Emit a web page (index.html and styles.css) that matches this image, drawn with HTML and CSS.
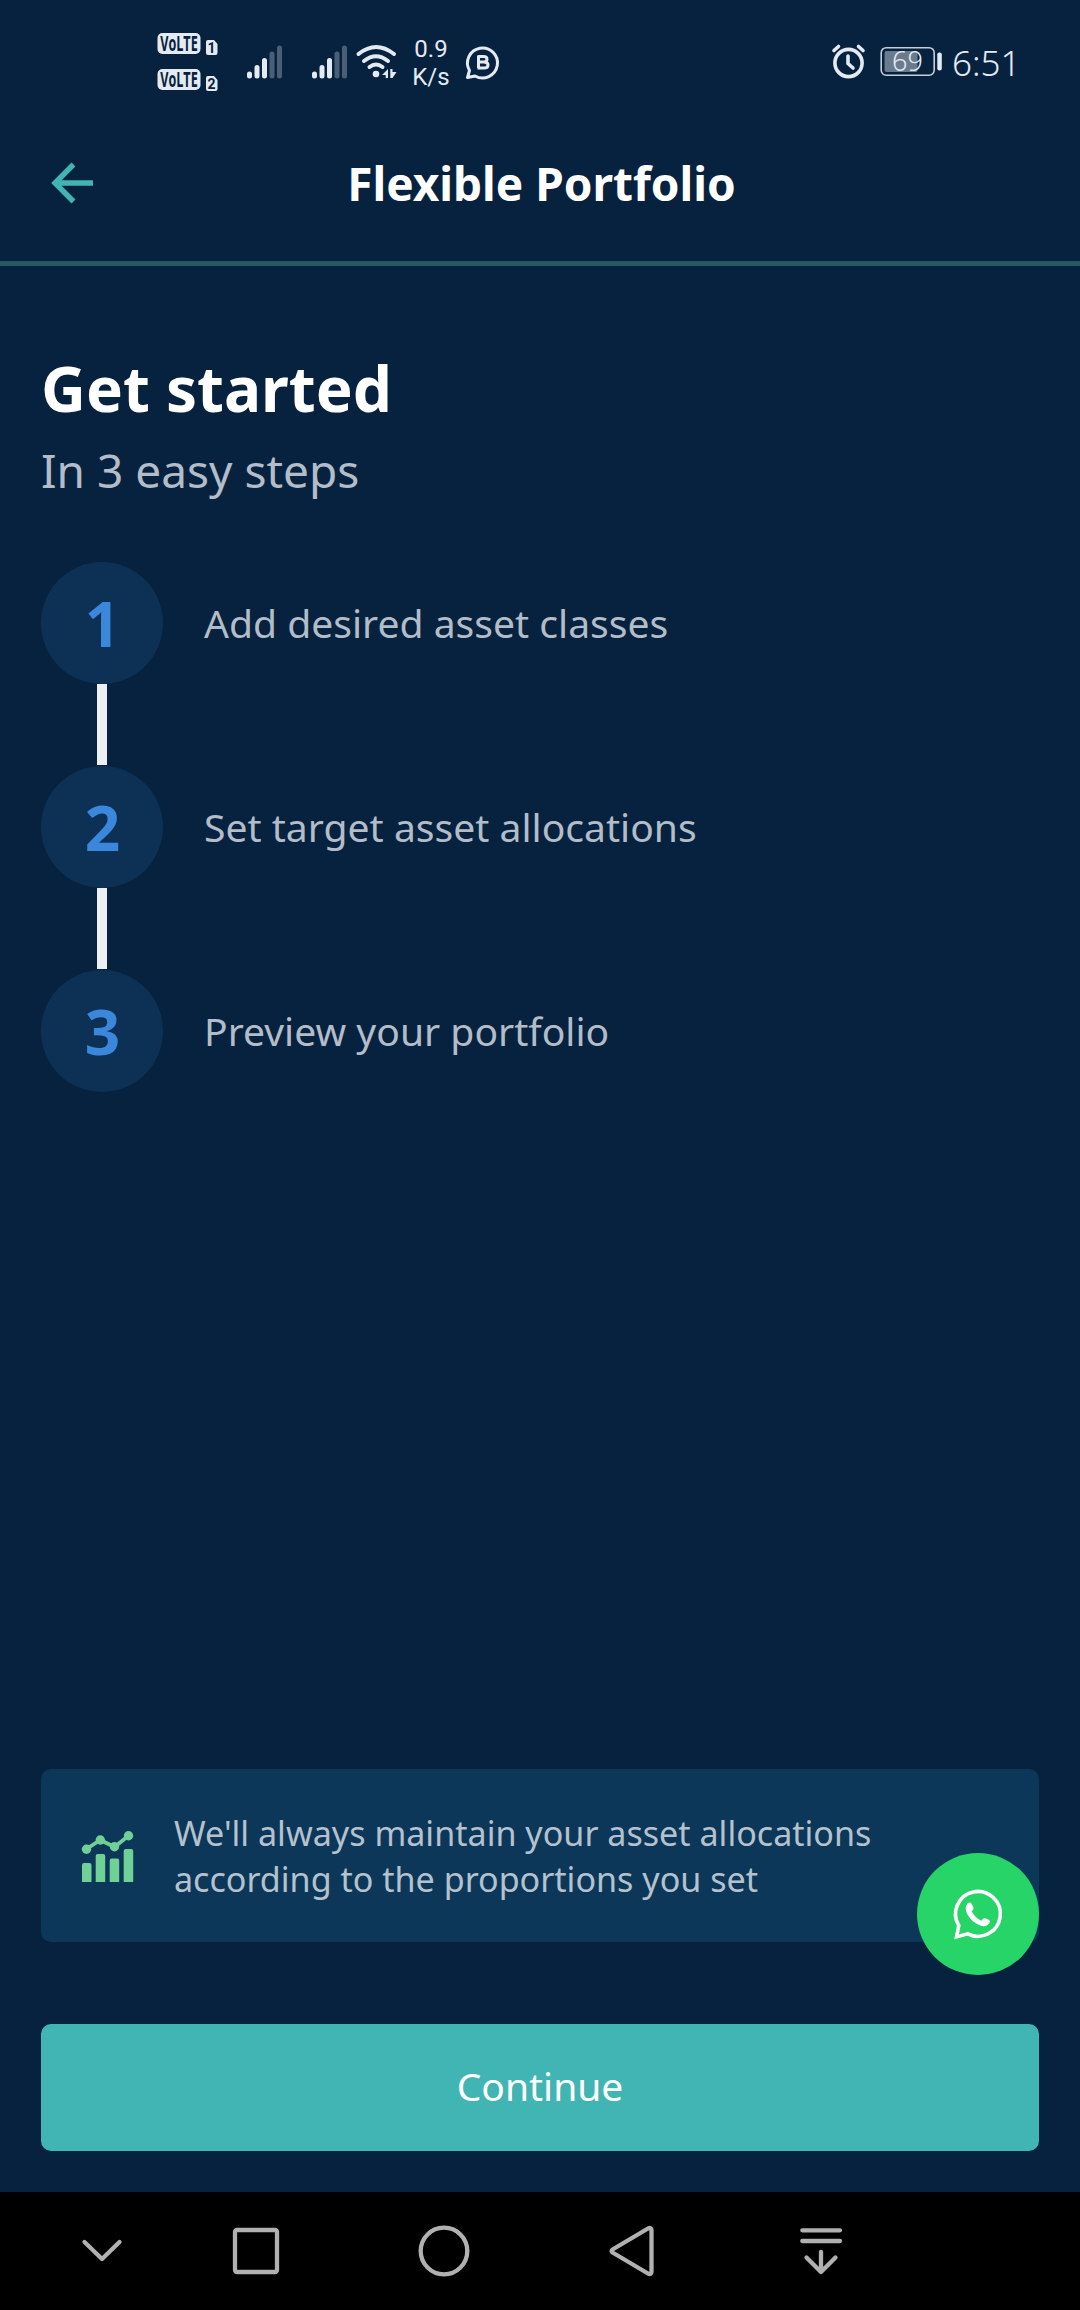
FILE: index.html
```html
<!DOCTYPE html>
<html lang="en">
<head>
<meta charset="utf-8">
<title>Flexible Portfolio</title>
<link rel="stylesheet" href="styles.css">
</head>
<body>
<div class="screen">
  <div class="status">
    <div class="status-left">
      <svg class="volte" width="62" height="60" viewBox="157 32 62 60">
        <g fill="#e4eaf1">
          <rect x="157.500" y="33" width="43" height="21" rx="5"/>
          <rect x="157.500" y="69" width="43" height="21" rx="5"/>
          <path d="M208 40h6l3.500 4v9q0 2-2 2h-7.500q-2 0-2-2v-11q0-2 2-2z"/>
          <path d="M208 76h6l3.500 4v9q0 2-2 2h-7.500q-2 0-2-2v-11q0-2 2-2z"/>
        </g>
        <g class="volte-text">
          <text transform="translate(179 51) scale(.6 1)">VoLTE</text>
          <text transform="translate(179 87) scale(.6 1)">VoLTE</text>
        </g>
        <g class="sim-text"><text x="211.500" y="52.500">1</text><text x="211.500" y="88.500">2</text></g>
      </svg>
      <svg class="signal" width="36" height="34" viewBox="0 0 36 34" stroke="#e4eaf1" stroke-width="5" stroke-linecap="round">
        <path d="M2.500 29v2M10 22.500V31M17.500 15.500V31"/><path d="M25 9V31M32.500 3V31" opacity=".3"/>
      </svg>
      <svg class="signal-two" width="36" height="34" viewBox="0 0 36 34" stroke="#e4eaf1" stroke-width="5" stroke-linecap="round">
        <path d="M2.500 29v2M10 22.500V31M17.500 15.500V31"/><path d="M25 9V31M32.500 3V31" opacity=".3"/>
      </svg>
      <svg class="wifi" width="42" height="36" viewBox="355 44 42 36" fill="none" stroke="#e4eaf1" stroke-width="4" stroke-linecap="round">
        <path d="M358.500 54Q376 40 394 54M364 61Q376 51.500 388 61M369.500 67Q376 62 382.500 67"/>
        <circle cx="376" cy="74" r="3.300" fill="#e4eaf1" stroke="none"/>
        <path d="M388 69v9h-2.300v-3h-3.700zM390.300 69h2.200v3h4l-4 6h-2.200z" fill="#e4eaf1" stroke="none"/>
      </svg>
      <div class="speed">0.9<br>K/s</div>
      <svg class="business" width="35" height="35" viewBox="465 45 35 35" fill="none" stroke="#e4eaf1" stroke-width="3" stroke-linejoin="round">
        <path d="M469.500 70.500A15 15 0 1 1 475 76L467.500 77.500z"/>
        <path d="M478.500 56V68M477.500 56.500h6q3.500 0 3.500 2.700t-3.500 2.700h-5h5.500q4 0 4 3t-4 3h-6.500" stroke-width="3"/>
      </svg>
    </div>
    <div class="status-right">
      <svg class="alarm" width="35" height="35" viewBox="831 44 35 35" fill="none" stroke="#e4eaf1" stroke-width="3.600" stroke-linecap="round">
        <circle cx="848.500" cy="63" r="13.600"/><path d="M848 56v7.500l5 4.500M834 50.500l4.500-4M863 50.500l-4.500-4"/>
      </svg>
      <svg class="battery" width="64" height="45" viewBox="880 38 64 45">
        <rect x="881.200" y="47.700" width="53" height="27.500" rx="5" fill="none" stroke="#c4ced8" stroke-width="1.600"/>
        <rect x="884.500" y="51" width="33" height="21" rx="2" fill="#6b7b8e"/>
        <rect x="937.300" y="52.500" width="4.500" height="18" rx="2" fill="#e4eaf1"/>
        <text class="battery-text" x="907.500" y="71">69</text>
      </svg>
      <div class="clock">6:51</div>
    </div>
  </div>

  <header class="header">
    <svg class="back" width="42" height="42" viewBox="52 163 42 42" fill="none" stroke="#41b5b3" stroke-width="5.400">
      <path d="M93 184H56M73.500 165.500L55 184L73.500 202.500"/>
    </svg>
    <h1 class="title">Flexible Portfolio</h1>
  </header>

  <main class="main">
    <h2 class="heading">Get started</h2>
    <p class="subheading">In 3 easy steps</p>
    <div class="steps">
      <div class="step"><span class="number">1</span><span class="label">Add desired asset classes</span></div>
      <div class="connector"></div>
      <div class="step"><span class="number">2</span><span class="label">Set target asset allocations</span></div>
      <div class="connector"></div>
      <div class="step"><span class="number">3</span><span class="label">Preview your portfolio</span></div>
    </div>
    <div class="info">
      <svg class="chart" width="52" height="52" viewBox="82 1830 52 52" fill="#6fd195">
        <path d="M82 1882v-17q0-2 2-2h5.500q2 0 2 2v17zM95.700 1882v-26q0-2 2-2h5.500q2 0 2 2v26zM109.700 1882v-21.500q0-2 2-2h5.500q2 0 2 2v21.500zM123.700 1882v-31q0-2 2-2h5.500q2 0 2 2v31z"/>
        <path d="M86.500 1849L100.300 1840L114.500 1847L128.500 1835.800" fill="none" stroke="#6fd195" stroke-width="3.800"/>
        <circle cx="86.500" cy="1849.200" r="4.700"/><circle cx="100.300" cy="1840" r="4.700"/><circle cx="114.500" cy="1846.800" r="4.700"/><circle cx="128.500" cy="1835.800" r="4.700"/>
      </svg>
      <p class="info-text">We'll always maintain your asset allocations<br>according to the proportions you set</p>
      <div class="fab">
        <svg width="52" height="52" viewBox="952 1888 52 52" fill="none" stroke="#fff" stroke-width="3.600">
          <path d="M958.800 1925.500A22.400 22.400 0 1 1 967.700 1933.800L956.600 1936.700Z"/>
          <path d="M967.500 1903.500q2.300-2 4 0l2 4.200q.4 1.200-1.700 3.800q3.700 6.700 9.500 9.300q2.200-3.200 3.600-2.800l4.700 2.300q1 .700-.4 3.300q-3 4-9 1.900q-9.200-3.400-13.300-11.900q-2.600-6.200.600-10.100z" fill="#fff" stroke="none"/>
        </svg>
      </div>
    </div>
    <button class="continue">Continue</button>
  </main>

  <nav class="navbar">
    <svg class="nav-hide" width="44" height="52" viewBox="80 2225 44 52"><path d="M84.500 2242L102 2259L119.500 2242"/></svg>
    <svg class="nav-recent" width="52" height="52" viewBox="230 2225 52 52"><rect x="235" y="2230" width="42" height="42" rx="2"/></svg>
    <svg class="nav-home" width="52" height="52" viewBox="418 2225 52 52"><circle cx="444" cy="2251" r="23.300"/></svg>
    <svg class="nav-back" width="50" height="52" viewBox="607 2225 50 52"><path d="M612.500 2249.500L648 2228.500Q651.500 2227 651.500 2230V2272Q651.500 2275 648 2273.500L612.500 2252.500Q611 2251 612.500 2249.500Z"/></svg>
    <svg class="nav-down" width="48" height="52" viewBox="797 2225 48 52"><path d="M802.300 2230.300H840M802.300 2241H840M821 2252V2272M806.500 2257.500L821 2272L835.500 2257.500"/></svg>
  </nav>
</div>
</body>
</html>
```
FILE: styles.css
```css
* { box-sizing: border-box; margin: 0; padding: 0; }
body { width: 1080px; background: #07223f; font-family: "Noto Sans", sans-serif; }
svg { display: block; flex: none; overflow: visible; }
.screen { display: flex; flex-direction: column; width: 1080px; height: 2310px; background: #07223f; }

.status { display: flex; justify-content: space-between; height: 107px; padding: 0 66px 0 157px; color: #e4eaf1; }
.status-left, .status-right { display: flex; align-items: flex-start; }
.volte { margin-top: 32px; }
.volte-text { font: 700 21px "Open Sans", sans-serif; fill: #07223f; text-anchor: middle; }
.sim-text { font: 700 14px Roboto, sans-serif; fill: #07223f; text-anchor: middle; }
.signal { margin: 45px 0 0 28px; }
.signal-two { margin: 45px 0 0 29px; }
.wifi { margin: 44px 0 0 7px; }
.speed { width: 44px; margin: 35px 0 0 12px; font: 400 24px/28px Roboto, sans-serif; text-align: center; }
.business { margin: 45px 0 0 12px; }
.alarm { margin-top: 44px; }
.battery { margin: 38px 0 0 14px; }
.battery-text { font: 300 27px "Noto Sans", sans-serif; fill: #e4eaf1; text-anchor: middle; }
.clock { width: 70px; margin: 37px 0 0 0; padding-left: 8px; font-size: 35px; font-weight: 300; line-height: 51px; white-space: nowrap; }

.header { display: flex; align-items: center; height: 159px; padding: 0 50px 3px 52px; border-bottom: 5px solid #25595f; }
.back { margin-top: 1px; }
.title { flex: 1; margin-right: 41px; font-size: 46px; font-weight: 700; line-height: 62px; text-align: center; color: #fff; }

.main { flex: 1; display: flex; flex-direction: column; padding: 80px 41px 41px; }
.heading { font-size: 62px; font-weight: 700; line-height: 84px; color: #fff; }
.subheading { margin-top: 9px; font-size: 46px; line-height: 62px; color: #b2bdc9; }
.steps { margin-top: 61px; }
.step { display: flex; align-items: center; gap: 41px; height: 122px; }
.number { width: 122px; height: 122px; padding-left: 1px; border-radius: 50%; background: #0d3155; font-size: 62px; font-weight: 700; line-height: 122px; text-align: center; color: #3a87dc; }
.label { font-size: 39.1px; line-height: 52px; color: #b2bdc9; }
.connector { width: 10px; height: 81px; margin: 0 0 1px 56px; background: #edf0f2; }

.info { position: relative; display: flex; align-items: center; gap: 40px; height: 173px; margin-top: auto; padding-left: 41px; border-radius: 10px; background: #0d3759; }
.info-text { font-size: 34.1px; line-height: 46px; color: #b4c2cf; white-space: nowrap; }
.fab { position: absolute; right: 0; bottom: -33px; display: flex; align-items: center; justify-content: center; width: 122px; height: 122px; border-radius: 50%; background: #27d467; }
.continue { height: 127px; margin-top: 82px; padding-bottom: 3px; border: 0; border-radius: 10px; background: #41b5b3; font: 400 39px/52px "Noto Sans", sans-serif; color: #fff; }

.navbar { display: flex; height: 118px; padding: 33px 0 0 80px; background: #000; }
.navbar svg { fill: none; stroke: #b1b1b1; stroke-width: 4.300; stroke-linecap: round; stroke-linejoin: round; }
.nav-recent { margin-left: 106px; }
.nav-home { margin-left: 136px; }
.nav-back { margin-left: 137px; }
.nav-down { margin-left: 140px; }
```
